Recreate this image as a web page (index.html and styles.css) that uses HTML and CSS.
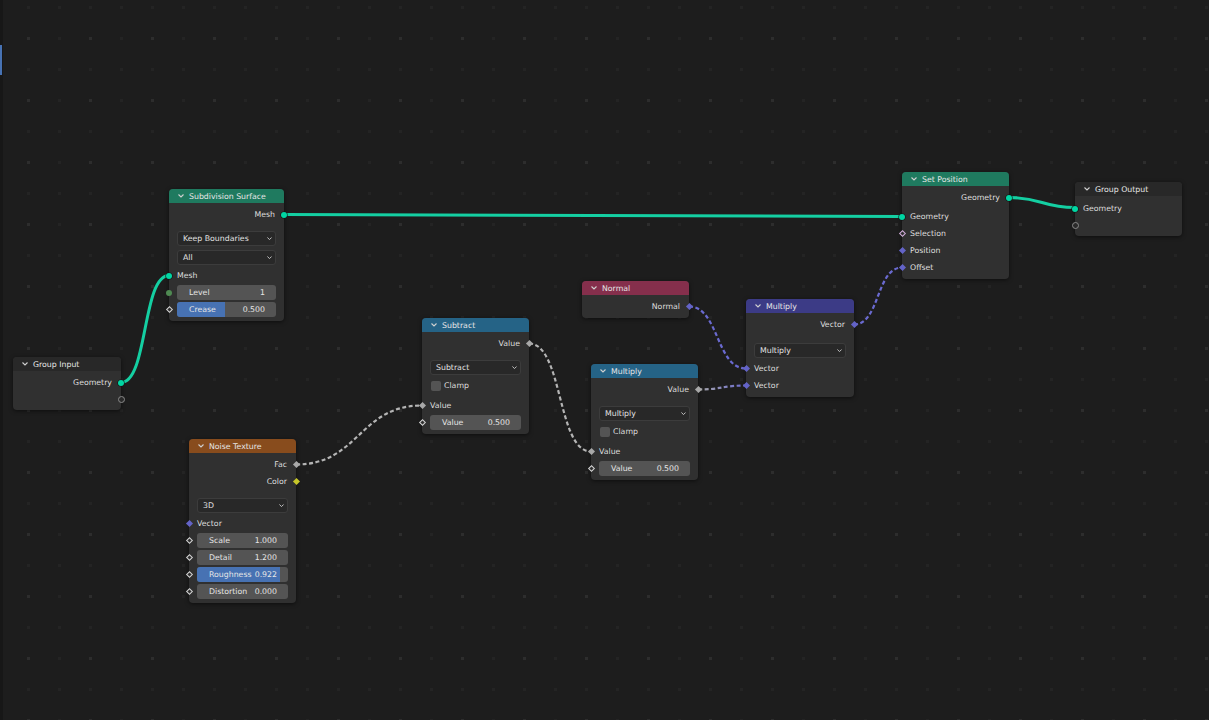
FILE: index.html
```html
<!DOCTYPE html>
<html lang="en">
<head>
    <meta charset="UTF-8">
    <title>Geometry Nodes</title>
    <link rel="stylesheet" href="styles.css">
</head>
<body>
<div class="editor">
    <svg class="backdrop" width="1209" height="720" viewBox="0 0 1209 720">
        <defs>
            <pattern id="dots" x="27" y="6" width="62" height="62" patternUnits="userSpaceOnUse">
                <rect x="0" y="0" width="3" height="3" fill="#242424"/>
                <rect x="31" y="0" width="3" height="3" fill="#242424"/>
                <rect x="0" y="31" width="3" height="3" fill="#2d2d2d"/>
                <rect x="31" y="31" width="3" height="3" fill="#242424"/>
            </pattern>
            <linearGradient id="greyToVector" x1="698" y1="0" x2="746" y2="0" gradientUnits="userSpaceOnUse">
                <stop offset="0" stop-color="#a8a8a8"/>
                <stop offset="1" stop-color="#6a6ad0"/>
            </linearGradient>
        </defs>
        <rect width="1209" height="720" fill="url(#dots)"/>

        <!-- geometry links -->
        <g class="link geometry">
            <path d="M284 214.5 C520 214.5 666 216.5 902 216.5"/>
            <path d="M1009 197.5 C1042 197.5 1042 207.5 1075 207.5"/>
            <path d="M121 382.5 C148 382.5 142 275.5 169 275.5"/>
        </g>

        <!-- field links -->
        <g class="link field">
            <path class="float" d="M296 464.5 C359 464.5 359 405.5 422 405.5"/>
            <path class="float" d="M529 343.5 C563 343.5 557 451.5 591 451.5"/>
            <path class="vector" d="M689 306.5 C719 306.5 716 368.5 746 368.5"/>
            <path class="mixed" d="M698 389.5 C722 389.5 722 385.5 746 385.5"/>
            <path class="vector" d="M854 324.5 C880 324.5 876 267.5 902 267.5"/>
        </g>
    </svg>

    <div class="region-edge"><span class="region-mark"></span></div>

    <!-- Group Input -->
    <div class="node node-group-input">
        <div class="node-header header-group">
            <svg class="chevron" viewBox="0 0 6 4"><polyline points="0.5,0.5 3,3 5.5,0.5"/></svg>
            Group Input
        </div>
        <div class="node-body compact">
            <div class="socket-row output"><span>Geometry</span><i class="socket geometry"></i></div>
            <div class="socket-row output"><i class="socket empty"></i></div>
        </div>
    </div>

    <!-- Subdivision Surface -->
    <div class="node node-subdiv">
        <div class="node-header header-geometry">
            <svg class="chevron" viewBox="0 0 6 4"><polyline points="0.5,0.5 3,3 5.5,0.5"/></svg>
            Subdivision Surface
        </div>
        <div class="node-body">
            <div class="socket-row output"><span>Mesh</span><i class="socket geometry"></i></div>
            <div class="dropdowns">
                <div class="dropdown"><span>Keep Boundaries</span><svg class="dd-arrow" viewBox="0 0 6 4"><polyline points="0.5,0.5 3,3 5.5,0.5"/></svg></div>
                <div class="dropdown"><span>All</span><svg class="dd-arrow" viewBox="0 0 6 4"><polyline points="0.5,0.5 3,3 5.5,0.5"/></svg></div>
            </div>
            <div class="socket-row input"><i class="socket geometry"></i><span>Mesh</span></div>
            <div class="socket-row input">
                <i class="socket integer"></i>
                <div class="field"><span>Level</span><span>1</span></div>
            </div>
            <div class="socket-row input">
                <i class="socket field-value"></i>
                <div class="field"><span class="fill" style="width:48.5%"></span><span>Crease</span><span>0.500</span></div>
            </div>
        </div>
    </div>

    <!-- Noise Texture -->
    <div class="node node-noise">
        <div class="node-header header-texture">
            <svg class="chevron" viewBox="0 0 6 4"><polyline points="0.5,0.5 3,3 5.5,0.5"/></svg>
            Noise Texture
        </div>
        <div class="node-body">
            <div class="socket-row output"><span>Fac</span><i class="socket float"></i></div>
            <div class="socket-row output"><span>Color</span><i class="socket color"></i></div>
            <div class="dropdowns">
                <div class="dropdown"><span>3D</span><svg class="dd-arrow" viewBox="0 0 6 4"><polyline points="0.5,0.5 3,3 5.5,0.5"/></svg></div>
            </div>
            <div class="socket-row input"><i class="socket vector"></i><span>Vector</span></div>
            <div class="socket-row input">
                <i class="socket field-value"></i>
                <div class="field"><span>Scale</span><span>1.000</span></div>
            </div>
            <div class="socket-row input">
                <i class="socket field-value"></i>
                <div class="field"><span>Detail</span><span>1.200</span></div>
            </div>
            <div class="socket-row input">
                <i class="socket field-value"></i>
                <div class="field"><span class="fill" style="width:91%"></span><span>Roughness</span><span>0.922</span></div>
            </div>
            <div class="socket-row input">
                <i class="socket field-value"></i>
                <div class="field"><span>Distortion</span><span>0.000</span></div>
            </div>
        </div>
    </div>

    <!-- Subtract -->
    <div class="node node-subtract">
        <div class="node-header header-converter">
            <svg class="chevron" viewBox="0 0 6 4"><polyline points="0.5,0.5 3,3 5.5,0.5"/></svg>
            Subtract
        </div>
        <div class="node-body">
            <div class="socket-row output"><span>Value</span><i class="socket float"></i></div>
            <div class="dropdowns">
                <div class="dropdown"><span>Subtract</span><svg class="dd-arrow" viewBox="0 0 6 4"><polyline points="0.5,0.5 3,3 5.5,0.5"/></svg></div>
            </div>
            <div class="check-row"><span class="checkbox"></span><span>Clamp</span></div>
            <div class="socket-row input"><i class="socket float"></i><span>Value</span></div>
            <div class="socket-row input">
                <i class="socket field-value"></i>
                <div class="field"><span>Value</span><span>0.500</span></div>
            </div>
        </div>
    </div>

    <!-- Normal -->
    <div class="node node-normal">
        <div class="node-header header-input">
            <svg class="chevron" viewBox="0 0 6 4"><polyline points="0.5,0.5 3,3 5.5,0.5"/></svg>
            Normal
        </div>
        <div class="node-body">
            <div class="socket-row output"><span>Normal</span><i class="socket vector"></i></div>
        </div>
    </div>

    <!-- Multiply (math) -->
    <div class="node node-math-multiply">
        <div class="node-header header-converter">
            <svg class="chevron" viewBox="0 0 6 4"><polyline points="0.5,0.5 3,3 5.5,0.5"/></svg>
            Multiply
        </div>
        <div class="node-body">
            <div class="socket-row output"><span>Value</span><i class="socket float"></i></div>
            <div class="dropdowns">
                <div class="dropdown"><span>Multiply</span><svg class="dd-arrow" viewBox="0 0 6 4"><polyline points="0.5,0.5 3,3 5.5,0.5"/></svg></div>
            </div>
            <div class="check-row"><span class="checkbox"></span><span>Clamp</span></div>
            <div class="socket-row input"><i class="socket float"></i><span>Value</span></div>
            <div class="socket-row input">
                <i class="socket field-value"></i>
                <div class="field"><span>Value</span><span>0.500</span></div>
            </div>
        </div>
    </div>

    <!-- Multiply (vector math) -->
    <div class="node node-vector-multiply">
        <div class="node-header header-vector">
            <svg class="chevron" viewBox="0 0 6 4"><polyline points="0.5,0.5 3,3 5.5,0.5"/></svg>
            Multiply
        </div>
        <div class="node-body">
            <div class="socket-row output"><span>Vector</span><i class="socket vector"></i></div>
            <div class="dropdowns spaced">
                <div class="dropdown"><span>Multiply</span><svg class="dd-arrow" viewBox="0 0 6 4"><polyline points="0.5,0.5 3,3 5.5,0.5"/></svg></div>
            </div>
            <div class="socket-row input"><i class="socket vector"></i><span>Vector</span></div>
            <div class="socket-row input"><i class="socket vector"></i><span>Vector</span></div>
        </div>
    </div>

    <!-- Set Position -->
    <div class="node node-set-position">
        <div class="node-header header-geometry">
            <svg class="chevron" viewBox="0 0 6 4"><polyline points="0.5,0.5 3,3 5.5,0.5"/></svg>
            Set Position
        </div>
        <div class="node-body">
            <div class="socket-row output"><span>Geometry</span><i class="socket geometry"></i></div>
            <div class="socket-row input first-input"><i class="socket geometry"></i><span>Geometry</span></div>
            <div class="socket-row input"><i class="socket boolean-field"></i><span>Selection</span></div>
            <div class="socket-row input"><i class="socket vector"></i><span>Position</span></div>
            <div class="socket-row input"><i class="socket vector"></i><span>Offset</span></div>
        </div>
    </div>

    <!-- Group Output -->
    <div class="node node-group-output">
        <div class="node-header header-group">
            <svg class="chevron" viewBox="0 0 6 4"><polyline points="0.5,0.5 3,3 5.5,0.5"/></svg>
            Group Output
        </div>
        <div class="node-body compact">
            <div class="socket-row input"><i class="socket geometry"></i><span>Geometry</span></div>
            <div class="socket-row input"><i class="socket empty"></i></div>
        </div>
    </div>
</div>
</body>
</html>
```

FILE: styles.css
```css
/* Editor canvas */
body {
    margin: 0;
    background: #1d1d1d;
    font-family: "DejaVu Sans", "Liberation Sans", sans-serif;
    font-size: 7.8px;
    color: #e2e2e2;
    overflow: hidden;
}

.editor {
    position: relative;
    width: 1209px;
    height: 720px;
    background: #1d1d1d;
    overflow: hidden;
}

.backdrop {
    position: absolute;
    top: 0;
    left: 0;
}

.region-edge {
    position: absolute;
    top: 0;
    left: 0;
    width: 3px;
    height: 100%;
    background: #171717;
}

.region-mark {
    display: block;
    margin-top: 45px;
    width: 2px;
    height: 30px;
    background: #4772b3;
}

/* Links */
.link path {
    fill: none;
}

.link.geometry path {
    stroke: #14cfa2;
    stroke-width: 3;
}

.link.field path {
    stroke-width: 2.2;
    stroke-dasharray: 4 2.5;
}

.link .float {
    stroke: #b4b4b4;
}

.link .vector {
    stroke: #6a6ad0;
}

.link .mixed {
    stroke: url(#greyToVector);
}

/* Nodes */
.node {
    position: absolute;
    width: 107px;
    background: #303030;
    border-radius: 4px;
    box-shadow: 0 1px 4px rgba(0,0,0,0.55);
}

.node-group-input { left: 13px; top: 357px; width: 108px; }
.node-subdiv { left: 169px; top: 189px; width: 115px; }
.node-noise { left: 189px; top: 439px; }
.node-subtract { left: 422px; top: 318px; }
.node-normal { left: 582px; top: 281px; }
.node-math-multiply { left: 591px; top: 364px; }
.node-vector-multiply { left: 746px; top: 299px; width: 108px; }
.node-set-position { left: 902px; top: 172px; }
.node-group-output { left: 1075px; top: 182px; }

.node-header {
    display: flex;
    align-items: center;
    height: 14px;
    padding-left: 9px;
    border-radius: 4px 4px 0 0;
    color: #e6e6e6;
    white-space: nowrap;
}

.header-group { background: #282828; }
.header-geometry { background: #1f7a5f; }
.header-texture { background: #884c1d; }
.header-converter { background: #256386; }
.header-input { background: #852f4c; }
.header-vector { background: #3c3b86; }

.chevron {
    width: 6px;
    height: 4px;
    margin-right: 5px;
}

.chevron polyline,
.dd-arrow polyline {
    fill: none;
    stroke: #d0d0d0;
    stroke-width: 1.1;
}

.node-body {
    padding: 3px 0 3px;
}

.node-body.compact {
    padding-bottom: 2px;
}

.node-group-output .node-body {
    padding-top: 4px;
}

/* Socket rows */
.socket-row {
    position: relative;
    display: flex;
    align-items: center;
    height: 17px;
    padding: 0 8px;
    color: #dedede;
}

.socket-row.output {
    justify-content: flex-end;
    padding-right: 9px;
}

.first-input {
    margin-top: 2px;
}

.socket {
    position: absolute;
    top: 50%;
    width: 6px;
    height: 6px;
    margin-top: -3px;
    box-sizing: border-box;
}

.socket-row.input .socket { left: -3px; }
.socket-row.output .socket { right: -3px; }

.socket.geometry {
    border-radius: 50%;
    background: #00d6a3;
    box-shadow: 0 0 0 0.6px #111;
}

.socket.empty {
    width: 7px;
    height: 7px;
    margin-top: -3.5px;
    border-radius: 50%;
    border: 1px solid #8a8a8a;
    background: #2a2a2a;
}

.socket-row.input .socket.empty { left: -3.5px; }
.socket-row.output .socket.empty { right: -3.5px; }

.socket.integer {
    border-radius: 50%;
    background: #4f8a52;
}

.socket.float,
.socket.vector,
.socket.color,
.socket.field-value,
.socket.boolean-field {
    width: 5px;
    height: 5px;
    margin-top: -2.5px;
    transform: rotate(45deg);
}

.socket-row.input .socket.float,
.socket-row.input .socket.vector,
.socket-row.input .socket.field-value,
.socket-row.input .socket.boolean-field { left: -2.5px; }

.socket-row.output .socket.float,
.socket-row.output .socket.vector,
.socket-row.output .socket.color { right: -2.5px; }

.socket.float { background: #a8a8a8; }
.socket.vector { background: #6363c7; }
.socket.color { background: #c7c729; }

.socket.field-value {
    border: 1.2px solid #d4d4d4;
    background: #303030;
}

.socket.boolean-field {
    border: 1.2px solid #d2addb;
    background: #303030;
}

/* Widgets */
.dropdowns {
    display: flex;
    flex-direction: column;
    gap: 4px;
    margin: 8px 8px 2px;
}

.dropdowns.spaced {
    margin-top: 10px;
}

.dropdown {
    display: flex;
    align-items: center;
    justify-content: space-between;
    height: 15px;
    padding: 0 3px 0 5px;
    box-sizing: border-box;
    background: #282828;
    border: 1px solid #3c3c3c;
    border-radius: 3px;
    color: #e2e2e2;
}

.dd-arrow {
    width: 5px;
    height: 3.5px;
}

.field {
    position: relative;
    flex: 1;
    display: flex;
    align-items: center;
    justify-content: space-between;
    height: 15px;
    padding: 0 11px 0 12px;
    background: #545454;
    border-radius: 3px;
    overflow: hidden;
    color: #e6e6e6;
}

.field span {
    position: relative;
}

.field .fill {
    position: absolute;
    top: 0;
    left: 0;
    bottom: 0;
    background: #4772b3;
}

.check-row {
    display: flex;
    align-items: center;
    height: 17px;
    padding: 0 8px 0 9px;
    margin: 1px 0 3px;
    color: #dedede;
}

.checkbox {
    width: 10px;
    height: 10px;
    margin-right: 3px;
    background: #545454;
    border-radius: 2px;
}
```
